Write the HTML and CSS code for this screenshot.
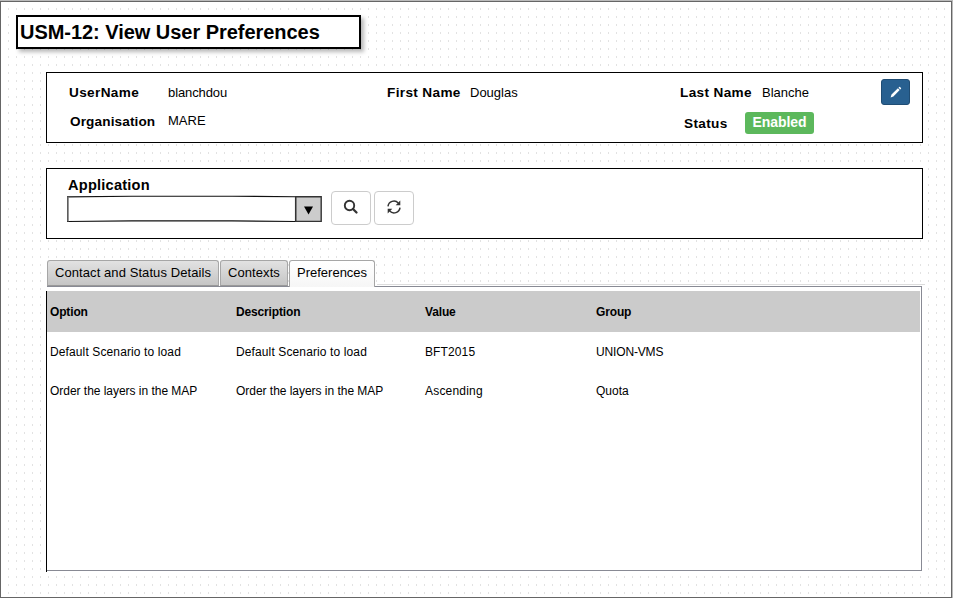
FILE: index.html
```html
<!DOCTYPE html>
<html lang="en">
<head>
<meta charset="utf-8">
<title>USM-12: View User Preferences</title>
<link rel="stylesheet" href="styles.css">
</head>
<body>
<main class="frame">
  <h1 class="title">USM-12: View User Preferences</h1>

  <section class="panel user">
    <span class="label username">UserName</span><span class="value login">blanchdou</span>
    <span class="label first">First Name</span><span class="value">Douglas</span>
    <span class="label">Last Name</span><span class="value">Blanche</span>
    <button class="edit" aria-label="Edit">
      <svg width="12" height="12" viewBox="0 0 12 12"><path d="M.6 11.400 1.500 8.600 7.900 2.300 9.700 4.100 3.400 10.500ZM8.500 1.700 9.200 1Q9.600.7 10 1L11 2Q11.300 2.400 11 2.800L10.300 3.500Z" fill="#fff"/></svg>
    </button>
    <span class="label org">Organisation</span><span class="value mare">MARE</span>
    <span class="label status">Status</span><span class="badge">Enabled</span>
  </section>

  <section class="panel search">
    <label class="applabel">Application</label>
    <div class="controls">
      <svg class="select" width="255" height="28" viewBox="0 0 255 28">
        <path d="M.5 1.900 65 1.200H165L228.500 1.700V26.500L165 25.900H65L.5 26.500Z" fill="#fff" stroke="#111" stroke-width="1.100"/>
        <path d="M1 2V26.500" stroke="#777" stroke-width="1.500"/>
        <path d="M228.800 1.700H254.200V26.400H228.800Z" fill="#ccc" stroke="#333" stroke-width="1.400"/>
        <path d="M237 11.500H246L241.500 19.500Z" fill="#000"/>
      </svg>
      <button class="tool find" aria-label="Search">
        <svg width="16" height="16" viewBox="0 0 16 16" fill="none" stroke="#333"><circle cx="6.500" cy="6.500" r="4.700" stroke-width="1.900"/><path d="M10 10 13.500 13.500" stroke-width="2.300" stroke-linecap="round"/></svg>
      </button>
      <button class="tool" aria-label="Refresh">
        <svg width="14" height="14" viewBox="0 0 14 14"><path d="M1 6.300A6 6 0 0 1 11.300 2.900M13 7.700A6 6 0 0 1 2.700 11.100" fill="none" stroke="#333" stroke-width="1.500"/><path d="M13.300.600V5.200H8.700ZM.700 13.400V8.800H5.300Z" fill="#333"/></svg>
      </button>
    </div>
  </section>

  <nav class="tabs">
    <span class="tab contact">Contact and Status Details</span>
    <span class="tab contexts">Contexts</span>
    <span class="tab active">Preferences</span>
    <span class="rule"></span>
  </nav>
  <section class="pane">
    <div class="content">
      <div class="row head"><span>Option</span><span>Description</span><span>Value</span><span>Group</span></div>
      <div class="row scenario"><span>Default Scenario to load</span><span>Default Scenario to load</span><span>BFT2015</span><span class="group">UNION-VMS</span></div>
      <div class="row"><span class="order">Order the layers in the MAP</span><span class="order">Order the layers in the MAP</span><span class="ascending">Ascending</span><span>Quota</span></div>
    </div>
  </section>
</main>
</body>
</html>
```
FILE: styles.css
```css
* { box-sizing: border-box; }
body {
  margin: 0;
  background: #bbb;
  color: #000;
  font-family: "Liberation Sans", Arial, sans-serif;
  font-size: 13px;
  line-height: 16px;
}
button { padding: 0; }
svg { display: block; }
.frame {
  width: 952px;
  height: 597px;
  margin-top: 1px;
  border: 1px solid #666;
  overflow: hidden;
  padding: 13px 0 0 15px;
  background:
    linear-gradient(transparent 2px, #fff 2px) 7px 6px / 8px 8px,
    linear-gradient(90deg, #e2e2e2 1px, #fff 1px) 7px 6px / 8px 8px;
}
.title {
  width: 345px;
  height: 34px;
  margin: 0;
  padding: 0 2px;
  border: 2px solid #000;
  background: #fff;
  box-shadow: 3px 3px 4px rgba(0, 0, 0, .28);
  font-size: 20px;
  letter-spacing: -.04px;
  line-height: 30px;
  white-space: nowrap;
}
.panel {
  width: 877px;
  height: 71px;
  margin-left: 30px;
  border: 1px solid #000;
  background: #fff;
}
.user {
  display: grid;
  grid-template-columns: 99px 219px 83px 210px 82px 119px 29px;
  grid-template-rows: 28px 28px;
  margin-top: 23px;
  padding: 6px 0 0 22px;
  align-items: start;
}
.label { margin-top: 6px; font-size: 13.6px; font-weight: bold; letter-spacing: .35px; white-space: nowrap; }
.value { margin-top: 6px; }
.login { letter-spacing: -.1px; }
.org { grid-column: 1; margin: 7px 0 0 1px; letter-spacing: .12px; }
.status { grid-column: 5; margin: 9px 0 0 4px; }
.badge {
  width: 69px;
  height: 22px;
  margin: 5px 0 0 -17px;
  border-radius: 3px;
  background: #5cb85c;
  color: #fff;
  font-size: 14px;
  font-weight: bold;
  letter-spacing: -.1px;
  line-height: 21px;
  text-align: center;
}
.edit {
  display: grid;
  place-items: center;
  width: 29px;
  height: 26px;
  border: 1px solid #204d74;
  border-radius: 3px;
  background: #286090;
}
.search { margin-top: 25px; padding: 8px 0 0 20px; }
.applabel {
  display: block;
  height: 14px;
  margin-left: 1px;
  font-size: 14.6px;
  font-weight: bold;
  letter-spacing: .22px;
}
.controls { display: flex; }
.select { margin: 4px 9px 0 0; }
.tool {
  display: grid;
  place-items: center;
  width: 40px;
  height: 34px;
  margin-right: 3px;
  padding-bottom: 2px;
  border: 1px solid #ccc;
  border-radius: 4px;
  background: #fff;
}
.tabs { display: flex; height: 26px; margin: 21px 0 0 31px; }
.tab {
  height: 26px;
  margin-right: 1px;
  padding-left: 7px;
  border: 1px solid #a6a6a6;
  border-bottom-color: #999;
  border-radius: 3px 3px 0 0;
  background: linear-gradient(#e2e2e2, #c5c5c5);
  line-height: 24px;
  white-space: nowrap;
}
.contact { width: 172px; letter-spacing: .08px; }
.contexts { width: 68px; letter-spacing: .08px; }
.active { width: 86px; height: 27px; border-bottom: 0; background: linear-gradient(#fff, #f6f6f6); }
.rule { width: 548px; height: 1px; margin: 24px 0 0 1px; background: #ddd; }
.pane {
  width: 875px;
  height: 285px;
  margin-left: 31px;
  border: 1px solid #888a94;
  border-left: 0;
  background: #fff;
}
.content {
  width: 874px;
  height: 281px;
  margin: 4px 0 0 -1px;
  border-left: 1px solid #000;
}
.row {
  display: grid;
  grid-template-columns: 186px 189px 171px 1fr;
  width: 873px;
  height: 39px;
  padding-left: 3px;
  font-size: 12px;
  line-height: 41px;
}
.scenario { letter-spacing: .12px; }
.group { letter-spacing: -.15px; }
.order { letter-spacing: -.03px; }
.ascending { letter-spacing: .2px; }
.head { height: 41px; background: #cbcbcb; font-weight: bold; letter-spacing: -.15px; line-height: 43px; }
```
